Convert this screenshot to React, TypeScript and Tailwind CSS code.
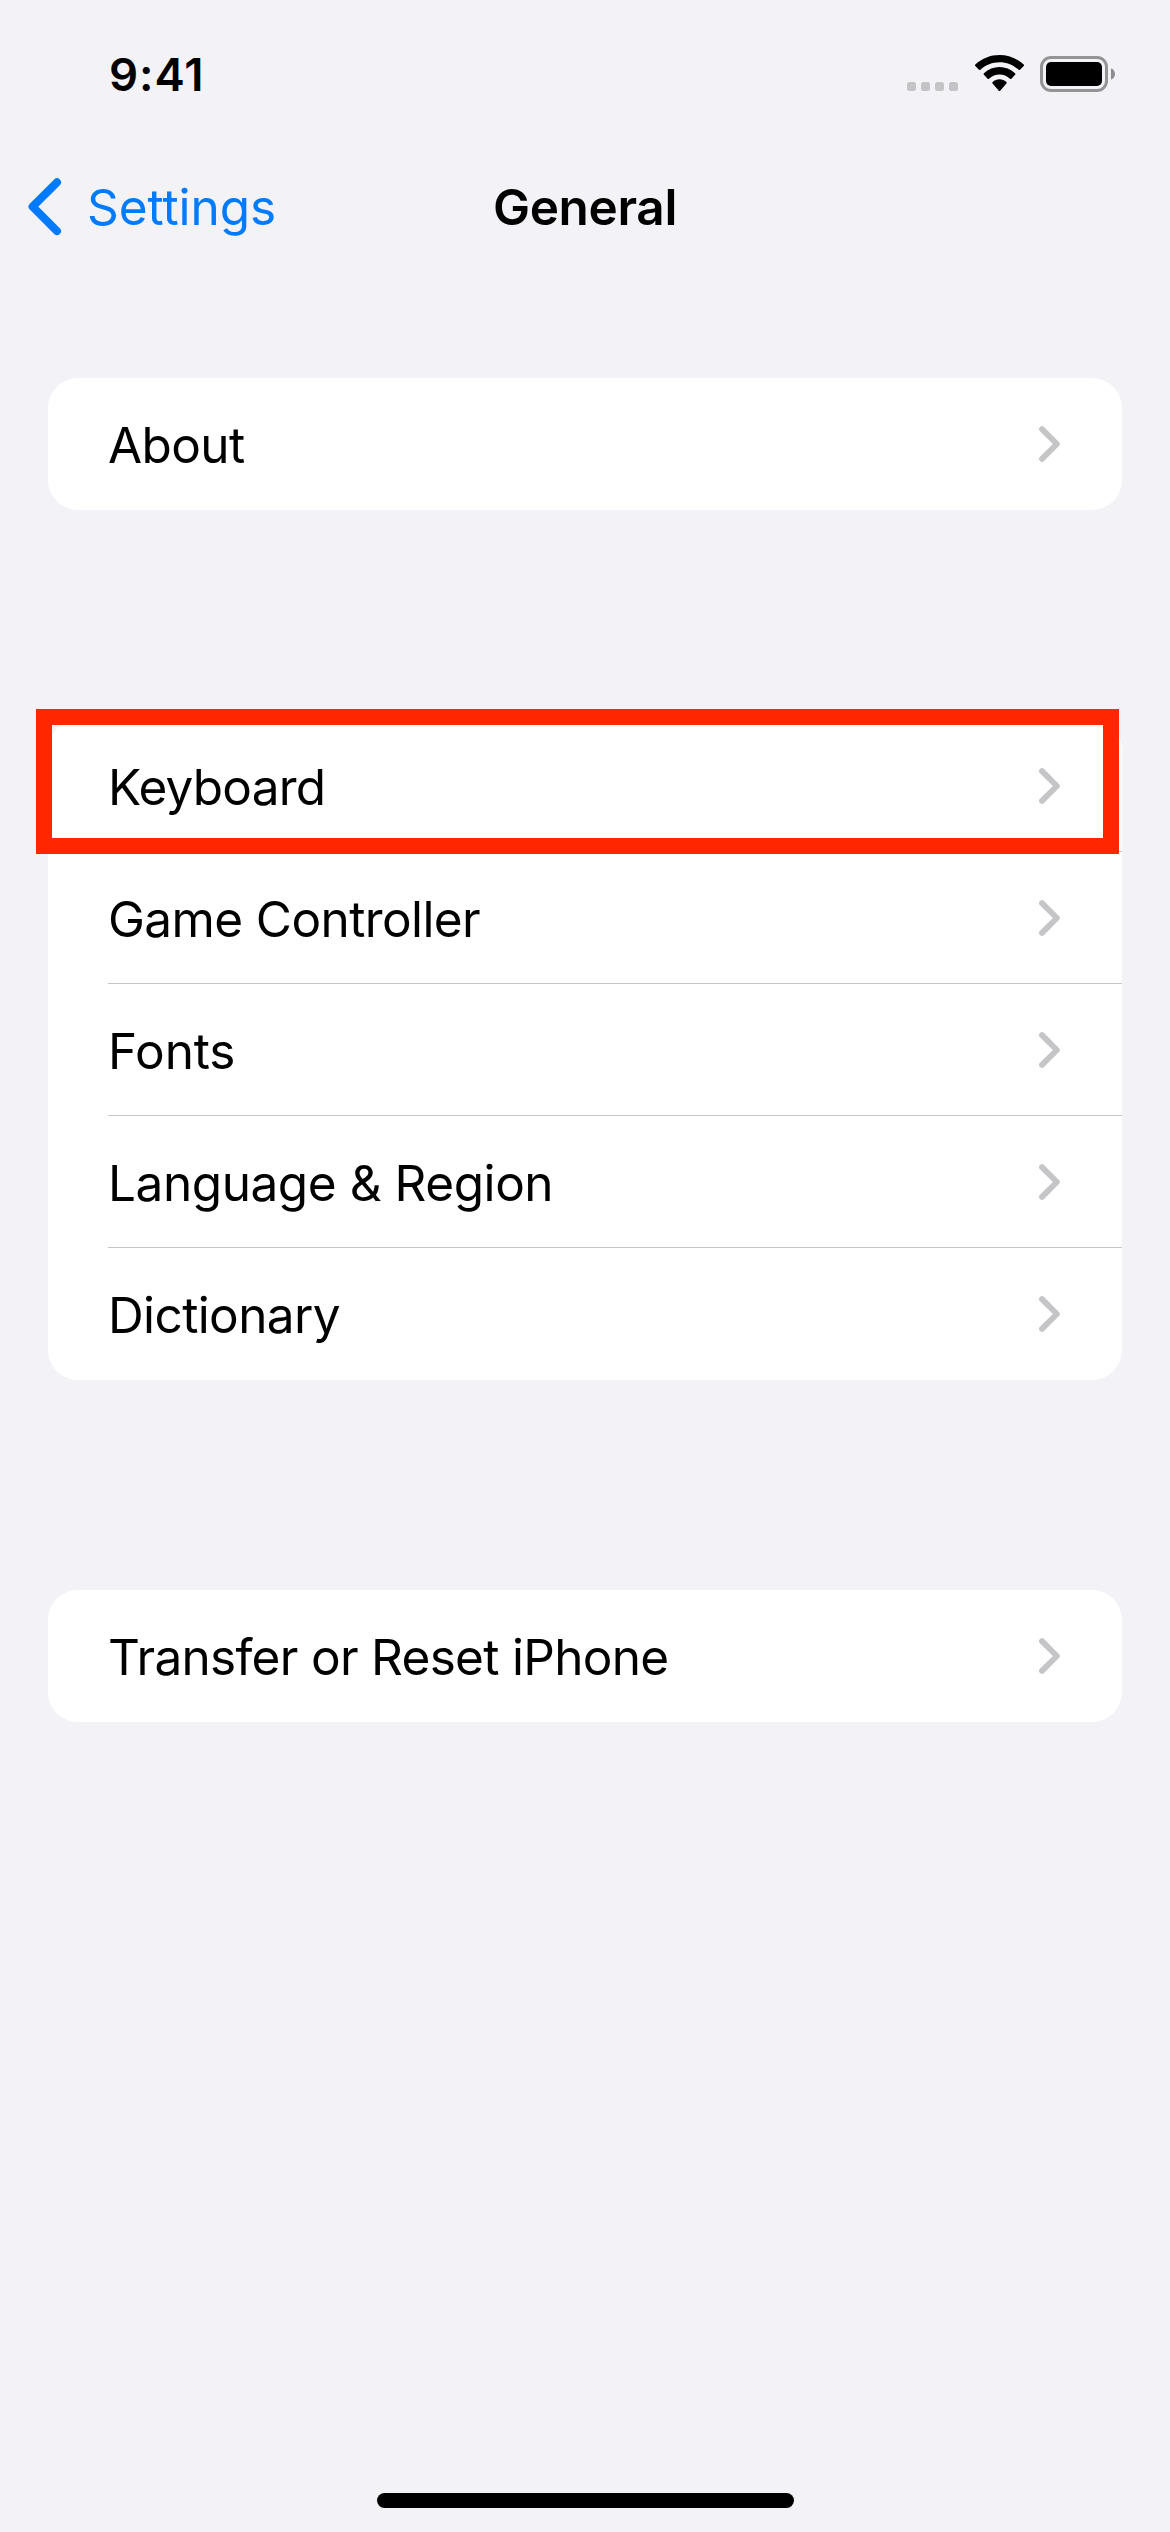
type RowItem = { label: string; className: string };

const aboutRows: RowItem[] = [
  { label: "About", className: "tracking-[-0.6px]" },
];

const keyboardRows: RowItem[] = [
  { label: "Keyboard", className: "tracking-[-0.8px]" },
  { label: "Game Controller", className: "tracking-[-0.6px]" },
  { label: "Fonts", className: "tracking-[-0.15px]" },
  { label: "Language & Region", className: "tracking-[-0.44px]" },
  { label: "Dictionary", className: "tracking-[-0.62px]" },
];

const resetRows: RowItem[] = [
  { label: "Transfer or Reset iPhone", className: "tracking-[-0.7px]" },
];

function Chevron() {
  return (
    <svg width="22" height="36" viewBox="0 0 22 36" fill="none" className="shrink-0">
      <path
        d="M3 3.1 17.9 18 3 32.9"
        stroke="#c5c5c7"
        strokeWidth="5.8"
        strokeLinecap="round"
        strokeLinejoin="round"
      />
    </svg>
  );
}

function Group({ rows }: { rows: RowItem[] }) {
  return (
    <ul className="overflow-hidden rounded-[30px] bg-white pl-[60px]">
      {rows.map((row, i) => (
        <li
          key={row.label}
          className={
            "flex h-[132px] items-start justify-between pr-[61px] " +
            (i < rows.length - 1 ? "border-b border-[#c6c6c8]" : "")
          }
        >
          <span className={"mt-[37px] text-[49.5px] leading-[60px] " + row.className}>
            {row.label}
          </span>
          <span className="mt-12">
            <Chevron />
          </span>
        </li>
      ))}
    </ul>
  );
}

function WifiIcon() {
  return (
    <svg
      width="49"
      height="36"
      viewBox="0 0 17.142 12.328"
      preserveAspectRatio="none"
      fill="#000"
    >
      <path d="M8.5713 2.46628C11.0584 2.46639 13.4504 3.38847 15.2529 5.04195C15.3887 5.16961 15.6056 5.168 15.7393 5.03834L17.0368 3.77487C17.1045 3.70911 17.1422 3.62004 17.1417 3.52735C17.1411 3.43467 17.1023 3.34603 17.0338 3.28104C12.3028 -1.09368 4.83907 -1.09368 0.108056 3.28104C0.039524 3.34598 0.00064 3.4346 0 3.52728C-0.00062 3.61996 0.0370483 3.70906 0.104689 3.77487L1.40255 5.03834C1.53615 5.16819 1.75327 5.1698 1.88893 5.04195C3.69167 3.38836 6.08395 2.46628 8.5713 2.46628Z" />
      <path d="M8.56795 6.68656C9.92527 6.68647 11.2341 7.19821 12.2403 8.12234C12.3763 8.25347 12.5907 8.25063 12.7234 8.11594L14.0106 6.79679C14.0784 6.72819 14.116 6.63507 14.115 6.53837C14.1141 6.44167 14.0748 6.34945 14.0058 6.28214C10.9413 3.38885 6.19716 3.38885 3.13267 6.28214C3.06379 6.34945 3.02446 6.44172 3.02361 6.53844C3.02276 6.63517 3.06044 6.72825 3.12836 6.79679L4.41527 8.11594C4.54794 8.25063 4.76227 8.25347 4.89822 8.12234C5.90373 7.19882 7.21166 6.68713 8.56795 6.68656Z" />
      <path d="M11.0924 9.48011C11.0943 9.58546 11.0572 9.68703 10.9899 9.76084L8.81327 12.2156C8.74946 12.2877 8.66247 12.3283 8.5717 12.3283C8.48093 12.3283 8.39394 12.2877 8.33013 12.2156L6.15314 9.76084C6.08585 9.68697 6.04886 9.58537 6.05092 9.48002C6.05297 9.37467 6.09388 9.27499 6.164 9.20453C7.55416 7.97165 9.58924 7.97165 10.9794 9.20453C11.0495 9.27505 11.0903 9.37476 11.0924 9.48011Z" />
    </svg>
  );
}

function BatteryIcon() {
  return (
    <svg width="75" height="36" viewBox="0 0 75 36" fill="none">
      <rect x="1.5" y="1.5" width="65" height="33" rx="9.5" stroke="#949497" strokeWidth="3" />
      <rect x="6" y="6" width="56" height="24" rx="5" fill="#000" />
      <path d="M71 12.2c2.4 1 4 3.3 4 5.800s-1.600 4.800-4 5.800z" fill="#8c8c8f" />
    </svg>
  );
}

export default function App() {
  return (
    <div className="flex h-[2532px] w-[1170px] flex-col bg-[#f2f2f7] font-['Inter',sans-serif] text-black">
      <header>
        <div className="flex h-[141px] items-start justify-between pl-[109px] pr-[55px]">
          <span className="mt-[47px] text-[45.5px] leading-[55px] font-semibold tracking-[0.94px]">
            9:41
          </span>
          <div className="mt-[55px] flex h-9 items-end">
            <div className="flex gap-[5px]">
              <span className="size-[9px] rounded-[2.5px] bg-[#c4c4c7]" />
              <span className="size-[9px] rounded-[2.5px] bg-[#c4c4c7]" />
              <span className="size-[9px] rounded-[2.5px] bg-[#c4c4c7]" />
              <span className="size-[9px] rounded-[2.5px] bg-[#c4c4c7]" />
            </div>
            <span className="ml-[16.5px] flex">
              <WifiIcon />
            </span>
            <span className="ml-[16.5px] flex translate-y-px">
              <BatteryIcon />
            </span>
          </div>
        </div>
        <nav className="grid h-[132px] grid-cols-3 items-center text-[49.5px] leading-[60px]">
          <a className="flex items-center pl-7 text-[#007aff]">
            <svg width="34" height="58" viewBox="0 0 34 58" fill="none">
              <path
                d="M29 4.3 4.6 28.7 29 53.1"
                stroke="#007aff"
                strokeWidth="8"
                strokeLinecap="round"
                strokeLinejoin="round"
              />
            </svg>
            <span className="ml-[25px] tracking-[-0.05px]">Settings</span>
          </a>
          <h1 className="text-center font-semibold tracking-[-0.32px]">General</h1>
        </nav>
      </header>
      <main className="mt-[105px] flex flex-col px-12">
        <Group rows={aboutRows} />
        <section className="relative mt-[210px]">
          <Group rows={keyboardRows} />
          <div className="absolute -top-[11px] -left-3 h-[145px] w-[1083px] border-[16px] border-[#ff2600]" />
        </section>
        <section className="mt-[210px]">
          <Group rows={resetRows} />
        </section>
      </main>
      <footer className="mt-auto flex justify-center pb-6">
        <div className="h-[15px] w-[417px] rounded-full bg-black" />
      </footer>
    </div>
  );
}
